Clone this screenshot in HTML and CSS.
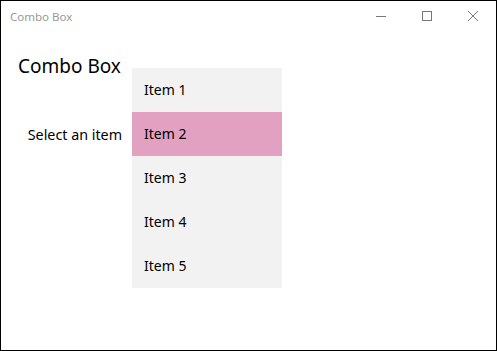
FILE: index.html
```html
<!DOCTYPE html>
<html lang="en">

<head>
    <meta charset="UTF-8" />
    <meta name="viewport" content="width=device-width, initial-scale=1.0" />
    <link rel="stylesheet" href="styles.css">
</head>

<body>
    <div class="window">
        <header class="titlebar">
            <span class="title">Combo Box</span>
            <div class="controls">
                <span class="ctl">
                    <svg width="12" height="12" viewBox="0 0 12 12"><path d="M1 6.5h10" stroke="#777" fill="none" /></svg>
                </span>
                <span class="ctl">
                    <svg width="12" height="12" viewBox="0 0 12 12"><rect x="1.5" y="1.5" width="9" height="9" stroke="#777" fill="none" /></svg>
                </span>
                <span class="ctl">
                    <svg width="12" height="12" viewBox="0 0 12 12"><path d="M1 1l10 10M11 1L1 11" stroke="#777" fill="none" /></svg>
                </span>
            </div>
        </header>
        <main class="content">
            <h1 class="heading">Combo Box</h1>
            <div class="row">
                <label class="label">Select an item</label>
                <div class="combo">
                    <ul class="popup">
                        <li>Item 1</li>
                        <li class="selected">Item 2</li>
                        <li>Item 3</li>
                        <li>Item 4</li>
                        <li>Item 5</li>
                    </ul>
                </div>
            </div>
        </main>
    </div>
</body>

</html>
```

FILE: styles.css
```css
* {
    box-sizing: border-box;
}

body {
    margin: 0;
    font-family: "Segoe UI", "Noto Sans", sans-serif;
    color: #000;
}

.window {
    width: 497px;
    height: 351px;
    border: 1px solid #000;
    background: #fff;
}

.titlebar {
    height: 30px;
    display: flex;
    align-items: center;
    justify-content: space-between;
}

.title {
    padding-left: 9px;
    font-size: 11.5px;
    color: #999;
}

.controls {
    display: flex;
}

.ctl {
    width: 46px;
    height: 30px;
    display: flex;
    align-items: center;
    justify-content: center;
}

.content {
    padding: 0 0 0 17px;
}

.heading {
    margin: 22px 0 0;
    font-size: 19px;
    font-weight: normal;
    line-height: 26px;
}

.row {
    display: flex;
    align-items: center;
    height: 44px;
    margin-top: 33px;
}

.label {
    width: 104px;
    text-align: right;
    font-size: 14.3px;
}

/* 열린 드롭다운 */
.combo {
    position: relative;
    margin-left: 10px;
    width: 150px;
    height: 44px;
}

.popup {
    position: absolute;
    top: -44px;
    left: 0;
    width: 150px;
    margin: 0;
    padding: 0;
    list-style: none;
    background: #f2f2f2;
}

.popup li {
    height: 44px;
    line-height: 44px;
    padding-left: 12px;
    font-size: 14px;
}

.popup li.selected {
    background: #e2a1c1;
}
```
